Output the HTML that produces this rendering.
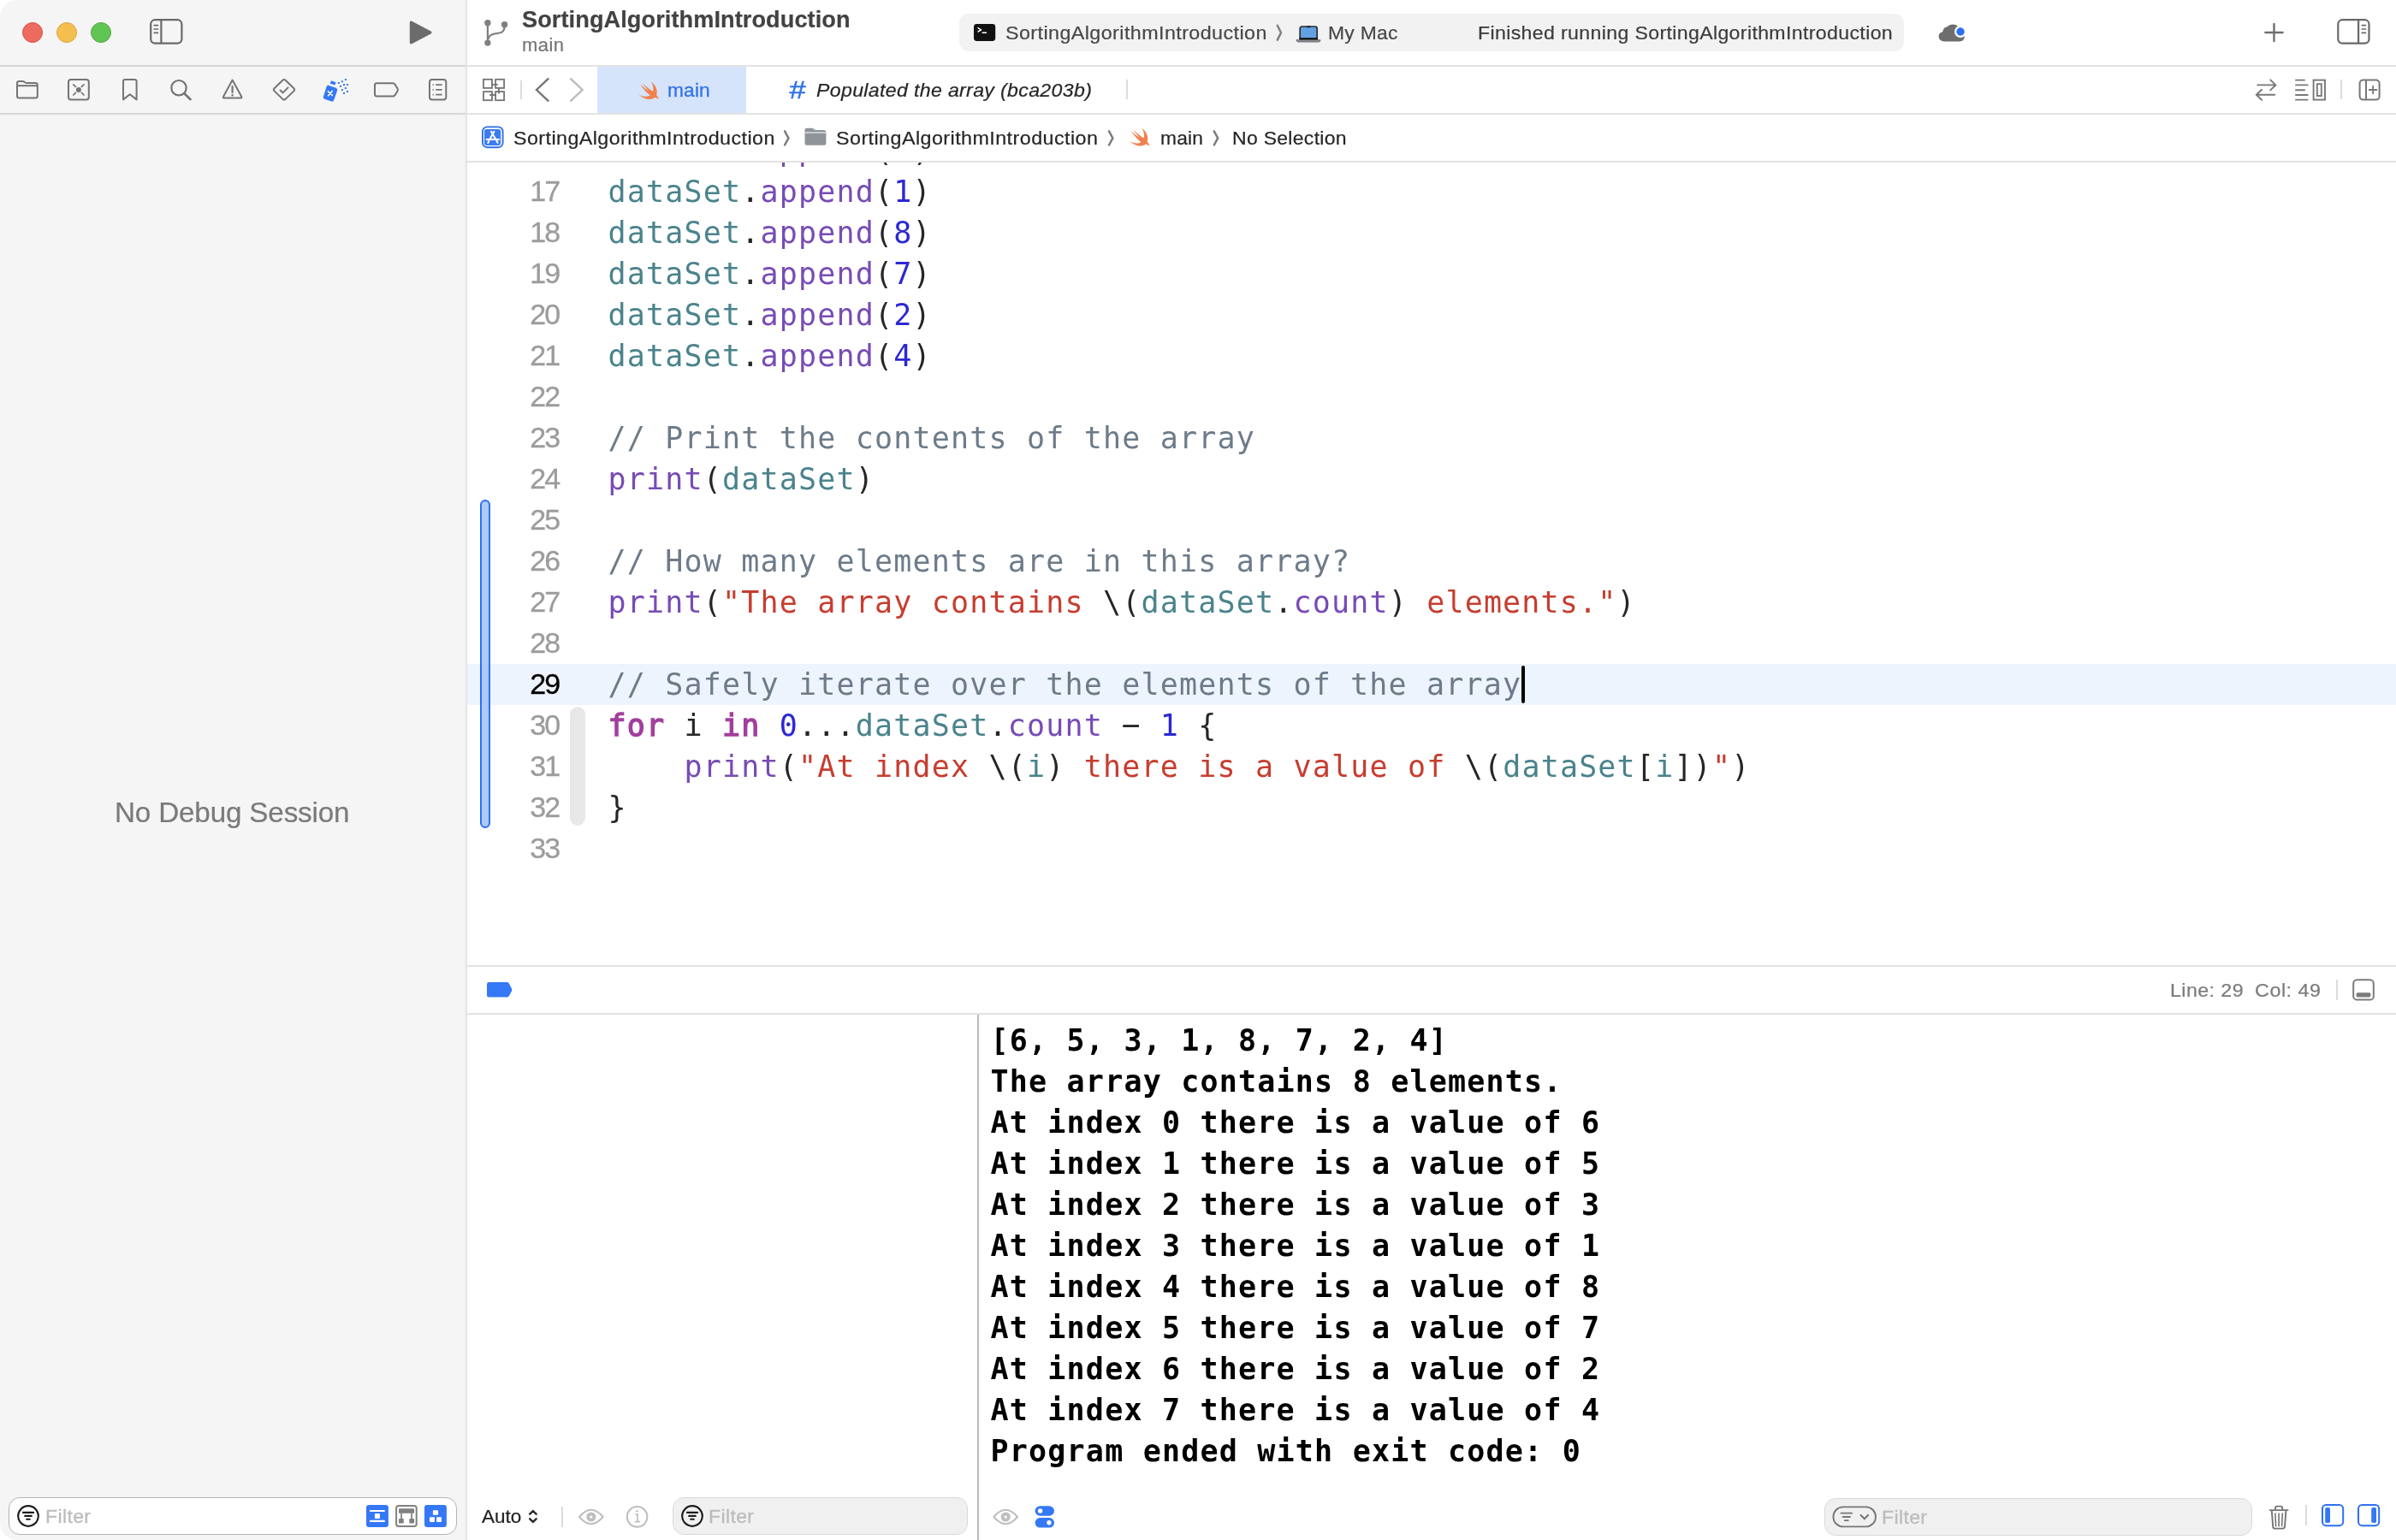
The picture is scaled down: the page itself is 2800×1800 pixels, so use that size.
<!DOCTYPE html>
<html lang="en">
<head>
<meta charset="utf-8">
<title>SortingAlgorithmIntroduction — main.swift</title>
<style>
*{box-sizing:border-box;margin:0;padding:0}
html,body{width:2800px;height:1800px;overflow:hidden;background:#fff}
body{position:relative;font-family:"Liberation Sans",sans-serif;color:#262626;-webkit-font-smoothing:antialiased}
.abs{position:absolute}
svg{position:absolute;overflow:visible}
.t{position:absolute;white-space:pre;line-height:1;-webkit-text-stroke-width:.22px}
/* sidebar */
#sidebar{left:0;top:0;width:546px;height:1800px;background:linear-gradient(90deg,#f5f5f5 0,#f5f5f5 541px,#f0f0f0 544px,#f0f0f0 546px);border-radius:20px 0 0 20px}
#sbdiv{left:544px;top:0;width:2px;height:1800px;background:linear-gradient(90deg,#ebebeb 0,#ebebeb 40%,#e0e0e0 60%,#e0e0e0 100%)}
.hl{position:absolute;height:2px;background:#e3e3e3}
.tl{position:absolute;top:26px;width:24px;height:24px;border-radius:50%}
/* code */
#editor{left:546px;top:190px;width:2254px;height:938px;overflow:hidden;will-change:transform}
.ln{position:absolute;left:0;width:2254px;height:48px}
.num{position:absolute;left:39.2px;width:68px;text-align:right;font-family:"Liberation Sans",sans-serif;font-size:34px;line-height:48px;color:#9c9c9c;letter-spacing:-1.9px;top:-1px;-webkit-text-stroke-width:.3px}
.code{position:absolute;left:164.5px;top:0;font-family:"DejaVu Sans Mono","Liberation Mono",monospace;font-size:35px;line-height:48px;letter-spacing:1.175px;white-space:pre;color:#262626}
.v{color:#4a838c}.f{color:#784bb5}.n{color:#2d28d4}.c{color:#6d7b89}.s{color:#c73d2f}.m{display:inline-block;transform:translateY(-2px) scaleX(2.1);transform-origin:47% 50%}.k{color:#a23e9d;-webkit-text-stroke:1.3px #a23e9d}
/* console */
#console{left:1144px;top:1186px;width:1656px;height:560px;overflow:hidden}
.out{position:absolute;left:13.5px;font-family:"DejaVu Sans Mono","Liberation Mono",monospace;font-weight:bold;font-size:35px;line-height:48px;letter-spacing:1.2px;white-space:pre;color:#000}
</style>
</head>
<body>
<div id="root" style="position:absolute;left:0;top:0;width:2800px;height:1800px;will-change:transform">
<!-- ============ SIDEBAR ============ -->
<div id="sidebar" class="abs"></div>
<div class="hl" style="left:0;top:76px;width:544px;background:#d6d6d6"></div>
<div class="hl" style="left:0;top:132px;width:544px;background:#d6d6d6"></div>
<div class="hl" style="left:546px;top:76px;width:2254px"></div>
<div class="hl" style="left:546px;top:132px;width:2254px"></div>
<div class="hl" style="left:546px;top:188px;width:2254px"></div>
<div class="hl" style="left:546px;top:1128px;width:2254px"></div>
<div class="hl" style="left:546px;top:1184px;width:2254px"></div>
<div id="sbdiv" class="abs"></div>
<div class="abs" style="left:1142px;top:1186px;width:2px;height:614px;background:#bababa"></div>

<div class="tl" style="left:26px;background:#ed6a5e;border:1px solid #d5544a"></div>
<div class="tl" style="left:66px;background:#f5bf4f;border:1px solid #d9a43e"></div>
<div class="tl" style="left:106px;background:#61c554;border:1px solid #51a73f"></div>

<div class="t" id="nodebug" style="left:134.20px;top:932.85px;font-size:33.5px;color:#7a7a7a;letter-spacing:-0.177px;transform:scaleX(0.9923);transform-origin:0 50%">No Debug Session</div>

<!-- TOOLBAR-ICONS -->
<!-- NAV-ICONS -->

<!-- ============ TITLE ============ -->
<div class="t" id="title" style="left:610.30px;top:9.93px;font-size:27px;font-weight:bold;color:#424242;letter-spacing:0.084px;transform:scaleX(1.0049);transform-origin:0 50%">SortingAlgorithmIntroduction</div>
<div class="t" id="subtitle" style="left:609.90px;top:42.20px;font-size:22px;color:#767676;letter-spacing:.5px;transform:scaleX(1.0000);transform-origin:0 50%">main</div>

<!-- status pill -->
<div class="abs" id="pill" style="left:1121px;top:16px;width:1104px;height:44px;border-radius:11px;background:#f2f2f2"></div>
<div class="t" id="st1" style="left:1175.30px;top:27.82px;font-size:22.5px;color:#484848;letter-spacing:0.423px;transform:scaleX(1.0340);transform-origin:0 50%">SortingAlgorithmIntroduction</div>
<div class="t" id="st2" style="left:1552.00px;top:27.82px;font-size:22.5px;color:#484848;letter-spacing:0.293px;transform:scaleX(1.0155);transform-origin:0 50%">My Mac</div>
<div class="t" id="st3" style="left:1726.50px;top:27.82px;font-size:22.5px;color:#3c3c3c;letter-spacing:0.343px;transform:scaleX(1.0278);transform-origin:0 50%">Finished running SortingAlgorithmIntroduction</div>

<!-- ============ TAB BAR ============ -->
<div class="abs" id="tabsel" style="left:698px;top:78px;width:174px;height:54px;background:#d6e4fb"></div>
<div class="t" id="tabmain" style="left:780.30px;top:94.91px;font-size:22.5px;color:#3072ea;-webkit-text-stroke:.3px #3072ea;letter-spacing:0.173px;transform:scaleX(1.0088);transform-origin:0 50%">main</div>
<div class="t" id="tabhash" style="left:921.6px;top:90.4px;font-size:30px;font-style:italic;color:#3072ea;transform:scaleX(1.15);transform-origin:0 0;-webkit-text-stroke-width:.5px">#</div>
<div class="t" id="tabcommit" style="left:953.50px;top:94.91px;font-size:22.5px;font-style:italic;color:#262626;letter-spacing:0.342px;transform:scaleX(1.0265);transform-origin:0 50%">Populated the array (bca203b)</div>
<div class="abs" style="left:608px;top:94px;width:2px;height:22px;background:#dcdcdc"></div>
<div class="abs" style="left:1316px;top:93px;width:2px;height:23px;background:#dcdcdc"></div>
<div class="abs" style="left:2735px;top:93px;width:2px;height:23px;background:#dcdcdc"></div>

<!-- ============ BREADCRUMB ============ -->
<div class="t" id="bc1" style="left:600.30px;top:150.91px;font-size:22.5px;letter-spacing:0.423px;transform:scaleX(1.0340);transform-origin:0 50%">SortingAlgorithmIntroduction</div>
<div class="t" id="bc2" style="left:977.10px;top:150.91px;font-size:22.5px;letter-spacing:0.433px;transform:scaleX(1.0349);transform-origin:0 50%">SortingAlgorithmIntroduction</div>
<div class="t" id="bc3" style="left:1355.70px;top:150.91px;font-size:22.5px;letter-spacing:0.202px;transform:scaleX(1.0103);transform-origin:0 50%">main</div>
<div class="t" id="bc4" style="left:1440.00px;top:150.91px;font-size:22.5px;letter-spacing:0.295px;transform:scaleX(1.0212);transform-origin:0 50%">No Selection</div>

<!-- ============ EDITOR ============ -->
<div id="editor" class="abs">
<div class="abs" id="curline" style="left:0;top:586px;width:2254px;height:48px;background:#edf4fe"></div>
<div class="abs" id="changebar" style="left:15px;top:394px;width:12px;height:383.6px;border:2px solid #2f6ff5;border-radius:6px;background:#adc9fa"></div>
<div class="abs" id="fold" style="left:120px;top:636px;width:18px;height:139px;border-radius:9px;background:#e8e8e8"></div>
<div class="abs" id="caret" style="left:1232px;top:588px;width:4.2px;height:44px;border-radius:2.1px;background:#000"></div>
<!-- CODE-LINES -->
<div class="ln" style="top:-38px"><span class="num">16</span><span class="code"><span class="v">dataSet</span>.<span class="f">append</span>(<span class="n">3</span>)</span></div>
<div class="ln" style="top:10px"><span class="num">17</span><span class="code"><span class="v">dataSet</span>.<span class="f">append</span>(<span class="n">1</span>)</span></div>
<div class="ln" style="top:58px"><span class="num">18</span><span class="code"><span class="v">dataSet</span>.<span class="f">append</span>(<span class="n">8</span>)</span></div>
<div class="ln" style="top:106px"><span class="num">19</span><span class="code"><span class="v">dataSet</span>.<span class="f">append</span>(<span class="n">7</span>)</span></div>
<div class="ln" style="top:154px"><span class="num">20</span><span class="code"><span class="v">dataSet</span>.<span class="f">append</span>(<span class="n">2</span>)</span></div>
<div class="ln" style="top:202px"><span class="num">21</span><span class="code"><span class="v">dataSet</span>.<span class="f">append</span>(<span class="n">4</span>)</span></div>
<div class="ln" style="top:250px"><span class="num">22</span><span class="code"></span></div>
<div class="ln" style="top:298px"><span class="num">23</span><span class="code"><span class="c">// Print the contents of the array</span></span></div>
<div class="ln" style="top:346px"><span class="num">24</span><span class="code"><span class="f">print</span>(<span class="v">dataSet</span>)</span></div>
<div class="ln" style="top:394px"><span class="num">25</span><span class="code"></span></div>
<div class="ln" style="top:442px"><span class="num">26</span><span class="code"><span class="c">// How many elements are in this array?</span></span></div>
<div class="ln" style="top:490px"><span class="num">27</span><span class="code"><span class="f">print</span>(<span class="s">"The array contains </span>\(<span class="v">dataSet</span>.<span class="f">count</span>)<span class="s"> elements."</span>)</span></div>
<div class="ln" style="top:538px"><span class="num">28</span><span class="code"></span></div>
<div class="ln" style="top:586px"><span class="num" style="color:#000">29</span><span class="code"><span class="c">// Safely iterate over the elements of the array</span></span></div>
<div class="ln" style="top:634px"><span class="num">30</span><span class="code"><span class="k">for</span> i <span class="k">in</span> <span class="n">0</span>...<span class="v">dataSet</span>.<span class="f">count</span> <span class="m">-</span> <span class="n">1</span> {</span></div>
<div class="ln" style="top:682px"><span class="num">31</span><span class="code">    <span class="f">print</span>(<span class="s">"At index </span>\(<span class="v">i</span>)<span class="s"> there is a value of </span>\(<span class="v">dataSet</span>[<span class="v">i</span>])<span class="s">"</span>)</span></div>
<div class="ln" style="top:730px"><span class="num">32</span><span class="code">}</span></div>
<div class="ln" style="top:778px"><span class="num">33</span><span class="code"></span></div>
</div>

<!-- ============ DEBUG BAR ============ -->
<div class="t" id="linecol" style="left:2535.80px;top:1146.51px;font-size:22.5px;color:#7b7b7b;letter-spacing:0.416px;transform:scaleX(1.0307);transform-origin:0 50%">Line: 29</div>
<div class="t" id="linecol2" style="left:2634.80px;top:1146.51px;font-size:22.5px;color:#7b7b7b;letter-spacing:0.513px;transform:scaleX(1.0366);transform-origin:0 50%">Col: 49</div>
<div class="abs" style="left:2730px;top:1145px;width:2px;height:24px;background:#dcdcdc"></div>

<!-- ============ CONSOLE ============ -->
<div id="console" class="abs">
<!-- CONSOLE-LINES -->
<div class="out" style="top:6px">[6, 5, 3, 1, 8, 7, 2, 4]</div>
<div class="out" style="top:54px">The array contains 8 elements.</div>
<div class="out" style="top:102px">At index 0 there is a value of 6</div>
<div class="out" style="top:150px">At index 1 there is a value of 5</div>
<div class="out" style="top:198px">At index 2 there is a value of 3</div>
<div class="out" style="top:246px">At index 3 there is a value of 1</div>
<div class="out" style="top:294px">At index 4 there is a value of 8</div>
<div class="out" style="top:342px">At index 5 there is a value of 7</div>
<div class="out" style="top:390px">At index 6 there is a value of 2</div>
<div class="out" style="top:438px">At index 7 there is a value of 4</div>
<div class="out" style="top:486px">Program ended with exit code: 0</div>
</div>

<!-- ============ BOTTOM BARS ============ -->
<div class="abs" id="filt1" style="left:10px;top:1750px;width:524px;height:44px;border:1.5px solid #b4b4b4;border-radius:13px;background:#fff"></div>
<div class="t" id="f1" style="left:52.70px;top:1761.99px;font-size:22.5px;color:#bcbcbc;-webkit-text-stroke:.3px #bcbcbc;letter-spacing:0.326px;transform:scaleX(1.0274);transform-origin:0 50%">Filter</div>
<div class="t" id="auto" style="left:562.50px;top:1762.05px;font-size:22.5px;color:#222;letter-spacing:0.007px;transform:scaleX(1.0004);transform-origin:0 50%">Auto</div>
<div class="abs" style="left:656px;top:1761px;width:2px;height:24px;background:#dcdcdc"></div>
<div class="abs" id="filt2" style="left:786px;top:1750px;width:345px;height:44px;border:1.5px solid #d9d9d9;border-radius:13px;background:#f0f0f0"></div>
<div class="t" id="f2" style="left:828.20px;top:1761.99px;font-size:22.5px;color:#bcbcbc;-webkit-text-stroke:.3px #bcbcbc;letter-spacing:0.326px;transform:scaleX(1.0274);transform-origin:0 50%">Filter</div>
<div class="abs" id="filt3" style="left:2132px;top:1751px;width:500px;height:44px;border:1.5px solid #d9d9d9;border-radius:13px;background:#f0f0f0"></div>
<div class="t" id="f3" style="left:2199.00px;top:1762.99px;font-size:22.5px;color:#bcbcbc;-webkit-text-stroke:.3px #bcbcbc;letter-spacing:0.326px;transform:scaleX(1.0274);transform-origin:0 50%">Filter</div>
<div class="abs" style="left:2694px;top:1759px;width:2px;height:24px;background:#dcdcdc"></div>
<svg id="icons" width="2800" height="1800" viewBox="0 0 2800 1800" style="left:0;top:0" fill="none" stroke-linecap="round" stroke-linejoin="round">
<!-- sidebar toggle -->
<g stroke="#696969" stroke-width="2.2">
<rect x="176.2" y="23.2" width="36.2" height="27.4" rx="5"/>
<path d="M188.4 23.5V50.5" stroke-linecap="butt"/>
<path d="M180.3 29.6H184.4M180.3 34H184.4M180.3 38.4H184.4" stroke-width="1.7"/>
</g>
<!-- play -->
<path d="M480.5 26.2V49.8L502.8 38Z" fill="#6c6c6c" stroke="#6c6c6c" stroke-width="3.4"/>
<!-- branch -->
<g stroke="#808080" stroke-width="2.2" fill="#808080">
<circle cx="569.9" cy="26.8" r="2.6"/><circle cx="569.9" cy="50.1" r="2.6"/><circle cx="589.6" cy="28.8" r="2.6"/>
<path d="M569.9 27V50" fill="none"/>
<path d="M589.6 30C589.6 37 586.5 38.6 580 39.2C574 39.8 570.6 41.5 570 47" fill="none"/>
</g>
<!-- NAV: folder -->
<g stroke="#747474" stroke-width="2">
<path d="M20 99V97.2Q20 95 22.2 95H26.2Q27.2 95 28.2 95.6L29.6 96.5Q30.6 97.1 31.6 97.1H41.5Q43.8 97.1 43.8 99.4V112.3Q43.8 114.6 41.5 114.6H22.3Q20 114.6 20 112.3Z"/>
<path d="M20.5 100.2H43.3" stroke-linecap="butt"/>
</g>
<!-- NAV: source control -->
<g stroke="#747474" stroke-width="2">
<rect x="80" y="93" width="23.8" height="23.6" rx="3"/>
<circle cx="91.9" cy="104.9" r="2" fill="#747474"/>
<path d="M85.8 98.8L88.4 101.4M98 98.8L95.4 101.4M85.8 111L88.4 108.4M98 111L95.4 108.4" stroke-width="1.7"/>
</g>
<!-- NAV: bookmark -->
<path d="M144 95.2Q144 93 146.2 93H157.4Q159.6 93 159.6 95.2V116.4L151.8 110.2L144 116.4Z" stroke="#747474" stroke-width="2"/>
<!-- NAV: search -->
<g stroke="#747474" stroke-width="2.2"><circle cx="209" cy="102.7" r="8.7"/><path d="M215.4 109.2L222.6 116.2" stroke-width="2.6"/></g>
<!-- NAV: warning -->
<g stroke="#747474" stroke-width="2"><path d="M271.6 93.6L261 113Q260.5 114.6 262 114.6H281.3Q282.8 114.6 282.3 113Z"/>
<path d="M271.6 101V108" stroke-width="2.2"/><circle cx="271.6" cy="111.2" r=".6" fill="#747474" stroke-width="1.4"/></g>
<!-- NAV: test diamond -->
<g stroke="#747474" stroke-width="2"><path d="M330.4 93.7Q332 92.4 333.6 93.7L343.4 103.2Q344.8 104.8 343.4 106.4L333.6 115.9Q332 117.2 330.4 115.9L320.6 106.4Q319.2 104.8 320.6 103.2Z"/>
<path d="M327.6 105.6L330.6 108.4L336.6 102.4"/></g>
<!-- NAV: debug spray (active) -->
<g fill="#3478f6" stroke="none">
<path d="M383.2 99.6L392.6 102.7Q394.8 103.5 394.1 105.7L390.2 117.1Q389.4 119.2 387.2 118.5L379.3 115.8Q377.2 115 377.9 112.8L381.6 101.6Q382.4 99.4 383.2 99.6Z"/>
<path d="M387 94.3L392.6 96.2L391.4 99.6L385.8 97.7Z"/>
<rect x="402.9" y="92" width="2" height="2"/><rect x="398.9" y="94.3" width="2" height="2"/><rect x="394.9" y="96" width="2" height="2"/>
<rect x="401" y="98" width="2" height="2"/><rect x="404.9" y="98" width="2" height="2"/><rect x="397" y="99.8" width="2" height="2"/>
<rect x="402.9" y="102" width="2" height="2"/><rect x="399" y="104" width="2" height="2"/><rect x="405" y="106" width="2" height="2"/><rect x="401" y="108" width="2" height="2"/>
</g>
<path d="M383.4 106.9L388.4 111.3M388.2 106.4L383.6 111.8" stroke="#fff" stroke-width="1.6"/>
<!-- NAV: breakpoint tag -->
<path d="M440.3 97.3H459.3Q460.6 97.3 461.4 98.4L464.6 103.6Q465.3 104.9 464.6 106.2L461.4 111.4Q460.6 112.5 459.3 112.5H440.3Q438 112.5 438 110.2V99.6Q438 97.3 440.3 97.3Z" stroke="#747474" stroke-width="2"/>
<!-- NAV: report list -->
<g stroke="#747474" stroke-width="2"><rect x="502" y="93" width="19.3" height="23.6" rx="3"/>
<path d="M509.2 99.2H516.6M509.2 104.8H516.6M509.2 110.6H516.6" stroke-width="1.7" stroke-linecap="butt"/>
<path d="M505.6 99.2H506.8M505.6 104.8H506.8M505.6 110.6H506.8" stroke-width="1.7" stroke-linecap="butt"/></g>
<!-- TAB: grid -->
<g stroke="#757575" stroke-width="1.8" stroke-linejoin="miter" stroke-linecap="butt">
<rect x="565" y="92.8" width="10" height="10.1"/><rect x="579.1" y="92.8" width="10" height="10.1"/>
<rect x="565" y="107.1" width="10" height="10.1"/><rect x="579.1" y="107.1" width="10" height="10.1"/>
<path d="M575 98.8H581.8M582.9 103V109.6M572.2 111H579"/></g>
<!-- TAB: back / forward -->
<path d="M640.6 92.2L627 105L640.6 117.8" stroke="#757575" stroke-width="2.4" stroke-linejoin="miter"/>
<path d="M667 92.2L680.6 105L667 117.8" stroke="#bcbcbc" stroke-width="2.4" stroke-linejoin="miter"/>
<!-- swift bird (tab) -->
<path d="M15 0.4C20.6 4.4 23.6 10.6 21.4 16.2C23.6 18.6 24.4 20.6 23.8 21.4C22.4 19.4 20.4 18.8 18.6 19.8C14.4 22.2 6.8 21.6 0.4 15.4C5.6 18.4 10.8 18.8 14.2 16.8C9.6 13.2 5.4 8.4 2.6 3.6C6 6.8 9.6 9.6 12.6 11.6C10.2 9 7.4 5.6 5.2 2.4C9.2 6 13.6 9.8 17.4 12.2C18.4 8.4 17.6 4 15 0.4Z" transform="translate(745.6 94.8)" fill="#f0814f"/>
<path d="M15 0.4C20.6 4.4 23.6 10.6 21.4 16.2C23.6 18.6 24.4 20.6 23.8 21.4C22.4 19.4 20.4 18.8 18.6 19.8C14.4 22.2 6.8 21.6 0.4 15.4C5.6 18.4 10.8 18.8 14.2 16.8C9.6 13.2 5.4 8.4 2.6 3.6C6 6.8 9.6 9.6 12.6 11.6C10.2 9 7.4 5.6 5.2 2.4C9.2 6 13.6 9.8 17.4 12.2C18.4 8.4 17.6 4 15 0.4Z" transform="translate(1319.2 149.4)" fill="#f0814f"/>
<!-- app icon (breadcrumb) -->
<rect x="564" y="148.4" width="23.6" height="23.8" rx="5.2" fill="#fff" stroke="#2f6feb" stroke-width="1.9"/>
<rect x="566" y="150.9" width="19.1" height="19" rx="2.4" fill="#3b7cf0"/>
<path d="M577.4 153.7L572.5 162.6M571.3 165L570.2 167M574 153.7L581.6 166.7M568.5 163H577.2M580.4 163H583.2" stroke="#fff" stroke-width="2" stroke-linecap="round"/>
<!-- folder (breadcrumb) -->
<path d="M940.5 152.2Q940.5 149.8 942.9 149.8H948.6Q949.8 149.8 950.8 150.5L952 151.4Q953 152 954.2 152H963Q965.4 152 965.4 154.4V167.4Q965.4 169.8 963 169.8H942.9Q940.5 169.8 940.5 167.4Z" fill="#8f9499"/>
<path d="M940.5 155H965.4" stroke="#fff" stroke-width="1" stroke-linecap="butt"/>
<!-- chevrons in breadcrumb & status -->
<g stroke="#7c7c7c" stroke-width="2.5" stroke-linejoin="miter">
<path d="M917.1 153.3L921.5 161.4L917.1 169.5"/><path d="M1296 153.3L1300.4 161.4L1296 169.5"/><path d="M1418.8 153.3L1423.2 161.4L1418.8 169.5"/>
<path d="M1492.8 29.8L1497 38.2L1492.8 46.6" stroke-width="2.5" stroke="#808080"/></g>
<!-- terminal icon -->
<rect x="1138" y="28" width="25.2" height="19.9" rx="3.4" fill="#111"/>
<path d="M1142.6 32.4L1146.4 34.9L1142.6 37.4M1147.6 38.2H1153" stroke="#fff" stroke-width="1.5" stroke-linejoin="miter" stroke-linecap="butt"/>
<!-- laptop -->
<path d="M1519.2 33.4Q1519.2 31 1521.6 31H1536.8Q1539.2 31 1539.2 33.4V45.8H1519.2Z" fill="#63a0e3" stroke="#2e2e30" stroke-width="1.7"/>
<rect x="1518.4" y="44.2" width="21.6" height="2.4" fill="#111"/>
<rect x="1526.8" y="30.4" width="4.8" height="1.8" rx=".6" fill="#1e1e1e"/>
<path d="M1515.2 46.8H1543Q1543 49 1540.8 49H1517.4Q1515.2 49 1515.2 46.8Z" fill="#9b9ba3" stroke="#55555c" stroke-width=".8"/>
<!-- cloud with badge -->
<path d="M2272.6 48.4Q2265.6 48.4 2265.6 42.6Q2265.6 38 2270.2 37.2Q2270.8 32.4 2275.4 31.2Q2278 28.4 2282 28.4Q2288.6 28.4 2290.6 34.6Q2296 35.6 2296 41.6Q2296 48.4 2289.4 48.4Z" fill="#6e6e6e"/>
<circle cx="2291" cy="37" r="7" fill="#fff"/><circle cx="2291" cy="37" r="4.7" fill="#2f6ff5"/>
<!-- plus -->
<path d="M2647.4 38H2667.6M2657.5 27.9V48.1" stroke="#6e6e6e" stroke-width="2.4"/>
<!-- right inspector toggle -->
<g stroke="#696969" stroke-width="2.2" transform="translate(.7 0)">
<rect x="2731.6" y="23.2" width="36.2" height="27.4" rx="5"/>
<path d="M2755.4 23.5V50.5" stroke-linecap="butt"/>
<path d="M2759.6 29.6H2763.7M2759.6 34H2763.7M2759.6 38.4H2763.7" stroke-width="1.7"/>
</g>
<!-- swap arrows -->
<g stroke="#777" stroke-width="1.9" stroke-linejoin="miter" transform="translate(.6 0)">
<path d="M2637.6 99.4H2658.6M2652.6 93.4L2658.8 99.4L2652.6 105.4"/>
<path d="M2657.6 110.8H2636.4M2642.4 104.8L2636.2 110.8L2642.4 116.8"/></g>
<!-- minimap / lines + rect -->
<g stroke="#777" stroke-width="1.9" stroke-linecap="butt" stroke-linejoin="miter" transform="translate(.8 0)">
<path d="M2681.4 93.6H2693M2681.4 99.4H2696.6M2681.4 105.2H2693M2681.4 111H2696.6M2681.4 116.6H2696.6"/>
<rect x="2702.8" y="93.6" width="13.4" height="23"/><rect x="2707" y="98.2" width="5" height="13.8"/></g>
<!-- add editor -->
<g stroke="#777" stroke-width="2" transform="translate(1 0)"><rect x="2756.6" y="93.6" width="23" height="23" rx="4"/>
<path d="M2764 94V116.4" stroke-linecap="butt"/><path d="M2767.8 105H2776.4M2772.1 100.7V109.3" stroke-width="1.8"/></g>
<!-- DEBUG BAR: breakpoint toggle (blue tag) -->
<path d="M571.4 1148H592.4Q594 1148 594.8 1149.4L598 1155.4Q598.6 1156.8 598 1158.2L594.8 1164.2Q594 1165.6 592.4 1165.6H571.4Q569 1165.6 569 1163.2V1150.4Q569 1148 571.4 1148Z" fill="#3478f6"/>
<!-- DEBUG BAR: hide console button -->
<rect x="2750.2" y="1145.2" width="23.6" height="23.4" rx="4.2" stroke="#7b7b7b" stroke-width="2"/>
<rect x="2753.6" y="1160.2" width="16.8" height="5.2" rx="1.6" fill="#7b7b7b"/>
<!-- BOTTOM: filter circle icons -->
<g stroke="#1c1c1c" stroke-width="2.2"><circle cx="33" cy="1772" r="11.8"/><path d="M26.9 1767.9H39.1M29.2 1771.9H36.8M31.2 1775.8H34.8" stroke-width="2.1"/></g>
<g stroke="#1c1c1c" stroke-width="2.2"><circle cx="809" cy="1772" r="11.8"/><path d="M802.9 1767.9H815.1M805.2 1771.9H812.8M807.2 1775.8H810.8" stroke-width="2.1"/></g>
<!-- BOTTOM: three scope buttons -->
<rect x="428" y="1759" width="25.9" height="26" rx="3.2" fill="#3578f6"/>
<rect x="431.9" y="1765" width="18.1" height="2.1" rx="1" fill="#fff"/><rect x="431.9" y="1776.8" width="18.1" height="2.1" rx="1" fill="#fff"/><rect x="437.9" y="1769.1" width="6.1" height="5.8" rx="1" fill="#fff"/>
<rect x="463.1" y="1760" width="23.6" height="24" rx="2.8" fill="#fff" stroke="#808080" stroke-width="2"/>
<rect x="466" y="1763.2" width="18.1" height="5.5" rx=".8" fill="#808080"/><rect x="468.2" y="1768" width="1.7" height="8" fill="#808080"/><rect x="480.2" y="1768" width="1.7" height="8" fill="#808080"/>
<rect x="466" y="1775.1" width="5.8" height="5.5" rx=".8" fill="#808080"/><rect x="478.3" y="1775.1" width="5.8" height="5.5" rx=".8" fill="#808080"/>
<rect x="496" y="1759" width="25.9" height="26" rx="3.2" fill="#3578f6"/>
<rect x="505.9" y="1765.2" width="6.2" height="5.6" rx=".8" fill="#fff"/><rect x="502" y="1773.2" width="6" height="5.7" rx=".8" fill="#fff"/><rect x="510" y="1773.2" width="6" height="5.7" rx=".8" fill="#fff"/>
<!-- BOTTOM: Auto chevrons -->
<path d="M619.2 1769.7L622.9 1766.1L626.6 1769.7M619.2 1775.3L622.9 1778.9L626.6 1775.3" stroke="#2a2a2a" stroke-width="2.4" stroke-linejoin="miter"/>
<!-- BOTTOM: eye + info (disabled) -->
<g stroke="#bfbfbf" stroke-width="2.1"><path d="M677 1773Q690.8 1756.6 704.6 1773Q690.8 1789.4 677 1773Z"/><circle cx="690.8" cy="1773" r="3.6" stroke-width="4"/></g>
<g stroke="#bfbfbf" stroke-width="2.1"><circle cx="744.6" cy="1772.8" r="11.8"/><path d="M742.4 1770.2H745V1778.4M741.8 1778.6H748" stroke-width="1.7" stroke-linecap="butt" stroke-linejoin="miter"/><circle cx="744.4" cy="1766.2" r="1.3" fill="#bfbfbf" stroke="none"/></g>
<g stroke="#bfbfbf" stroke-width="2.1"><path d="M1161.4 1773Q1175.2 1756.6 1189 1773Q1175.2 1789.4 1161.4 1773Z"/><circle cx="1175.2" cy="1773" r="3.6" stroke-width="4"/></g>
<!-- BOTTOM: toggles -->
<rect x="1209.6" y="1760.2" width="22.4" height="11.6" rx="5.8" fill="#3478f6"/><rect x="1209.6" y="1774" width="22.4" height="11.6" rx="5.8" fill="#3478f6"/>
<circle cx="1215.6" cy="1766" r="2.7" fill="#fff"/><circle cx="1226" cy="1779.8" r="2.7" fill="#fff"/>
<!-- BOTTOM: filter pill w/ chevron -->
<rect x="2142.4" y="1761.4" width="49.6" height="23" rx="11.5" stroke="#767676" stroke-width="1.9"/>
<path d="M2151.4 1768.6H2164.2M2153.6 1773H2162M2155.8 1777.2H2159.8" stroke="#767676" stroke-width="1.8"/>
<path d="M2174.6 1771L2178.8 1775.2L2183 1771" stroke="#767676" stroke-width="2.2" stroke-linejoin="miter"/>
<!-- BOTTOM: trash -->
<g stroke="#757575" stroke-width="1.9"><path d="M2652.6 1765.1H2673.6M2659 1764.8V1762.6Q2659 1760.6 2661 1760.6H2665.2Q2667.2 1760.6 2667.2 1762.6V1764.8M2654.8 1765.6L2656.2 1784.4Q2656.4 1786.6 2658.6 1786.6H2667.6Q2669.8 1786.6 2670 1784.4L2671.4 1765.6"/>
<path d="M2658.9 1769L2659.6 1783.8M2663.1 1769V1783.8M2667.3 1769L2666.6 1783.8" stroke-width="1.6"/></g>
<!-- BOTTOM: panel toggles -->
<g stroke="#2f6ff5" stroke-width="2"><rect x="2714" y="1759" width="24.2" height="24.2" rx="4.4"/><rect x="2756" y="1759" width="24.2" height="24.2" rx="4.4"/></g>
<rect x="2717.2" y="1762" width="5.8" height="18" rx="1.8" fill="#3578f6"/><rect x="2771.2" y="1762" width="5.8" height="18" rx="1.8" fill="#3578f6"/>
</svg>
</div>
</body>
</html>
